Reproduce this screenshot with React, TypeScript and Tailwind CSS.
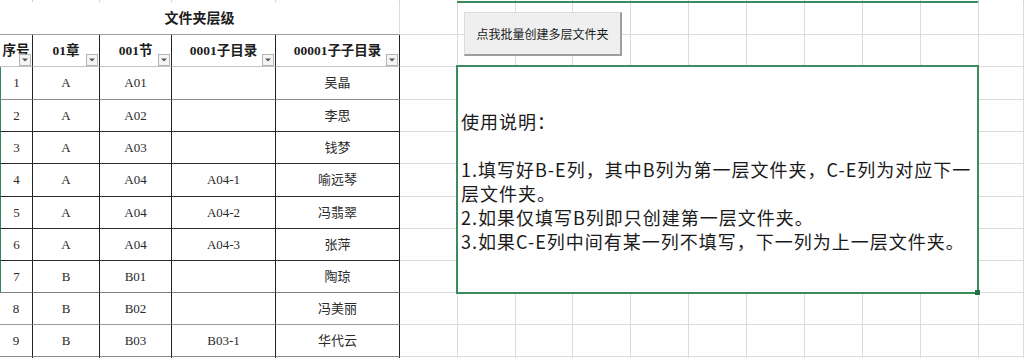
const colW = [
  'w-[33px]', 'w-[67px]', 'w-[72px]', 'w-[104px]', 'w-[124px]',
  'w-[58px]', 'w-[58px]', 'w-[57px]', 'w-[58px]', 'w-[58px]', 'w-[58px]',
  'w-[58px]', 'w-[58px]', 'w-[58px]', 'w-[58px]', 'w-[45px]',
];

const rowH = [
  'h-[33px]', 'h-[32px]', 'h-[32px]', 'h-[33px]', 'h-[32px]',
  'h-[32px]', 'h-[32px]', 'h-[32px]', 'h-[32px]', 'h-[32px]',
];

// bottom line colour of each data row inside the table
const rowLine = [
  'border-b-[#8c8c8c]', 'border-b-[#2a2a2a]', 'border-b-[#2a2a2a]', 'border-b-[#2a2a2a]', 'border-b-[#2a2a2a]',
  'border-b-[#2a2a2a]', 'border-b-[#808080]', 'border-b-[#9a9a9a]', 'border-b-[#8c8c8c]', 'border-b-[#8c8c8c]',
];

const headers = ['序号', '01章', '001节', '0001子目录', '00001子子目录'];

const rows = [
  ['1', 'A', 'A01', '', '吴晶'],
  ['2', 'A', 'A02', '', '李思'],
  ['3', 'A', 'A03', '', '钱梦'],
  ['4', 'A', 'A04', 'A04-1', '喻远琴'],
  ['5', 'A', 'A04', 'A04-2', '冯翡翠'],
  ['6', 'A', 'A04', 'A04-3', '张萍'],
  ['7', 'B', 'B01', '', '陶琼'],
  ['8', 'B', 'B02', '', '冯美丽'],
  ['9', 'B', 'B03', 'B03-1', '华代云'],
  ['', '', '', '', ''],
];

const cellFont = "font-['Liberation_Serif','Noto_Sans_CJK_SC',serif]";

const BlankCells = ({ from = 5 }: { from?: number }) => (
  <>
    {colW.slice(from).map((w, j) => (
      <div key={j} className={`${w} shrink-0 h-full border-r border-b border-[#dcdcdc]`} />
    ))}
  </>
);

const FilterButton = () => (
  <div className="absolute right-[1px] bottom-0 w-[12px] h-[12px] border border-[#b4b4b4] bg-[#f4f4f4] flex items-center justify-center">
    <svg width="6" height="4" viewBox="0 0 6 4">
      <path d="M0 0.5 L6 0.5 L3 3.5 Z" fill="#555" />
    </svg>
  </div>
);

export default function App() {
  return (
    <div className={`relative w-[1024px] h-[358px] overflow-hidden bg-white ${cellFont} text-[#1e1e1e]`}>
      {/* partial row at the top */}
      <div className="flex h-[2px]">
        {colW.map((w, j) => (
          <div key={j} className={`${w} shrink-0 h-full border-r border-[#d0d0d0]`} />
        ))}
      </div>

      {/* title row */}
      <div className="flex h-[33px]">
        <div className="w-[400px] shrink-0 h-full flex items-center justify-center border-b border-r border-b-[#9c9c9c] border-r-[#dcdcdc] text-[14px] font-bold">
          文件夹层级
        </div>
        <BlankCells />
      </div>

      {/* header row */}
      <div className="flex h-[32px]">
        {headers.map((h, j) => (
          <div
            key={j}
            className={`${colW[j]} shrink-0 h-full relative flex items-center justify-center whitespace-nowrap border-r border-b border-r-[#222] border-b-[#c4c4c4] text-[13.5px] font-bold pt-[1px]`}
          >
            <span className="relative">{h}</span>
            <FilterButton />
          </div>
        ))}
        <BlankCells />
      </div>

      {/* data rows */}
      {rows.map((r, i) => (
        <div key={i} className={`flex ${rowH[i]}`}>
          {r.map((v, j) => (
            <div
              key={j}
              className={`${colW[j]} shrink-0 h-full flex items-center justify-center whitespace-nowrap border-r border-b border-r-[#222] ${rowLine[i]} text-[13px] text-[#2a2a2a] ${j === 0 && i < 7 ? 'border-l border-l-[#2e8a57]' : ''}`}
            >
              {v}
            </div>
          ))}
          <BlankCells />
        </div>
      ))}

      {/* green frame line at the very top */}
      <div className="absolute left-[457px] top-[1px] w-[521px] h-[2px] bg-[#3b8a5c]" />

      {/* macro button */}
      <div className="absolute left-[464px] top-[12px] w-[158px] h-[44px] flex items-center justify-center bg-[#efefef] border-t border-l border-r-2 border-b-2 border-t-[#dadada] border-l-[#dadada] border-r-[#9e9e9e] border-b-[#9e9e9e] font-['Noto_Sans_CJK_SC',sans-serif] text-[12px] text-[#1a1a1a]">
        点我批量创建多层文件夹
      </div>

      {/* instructions text box */}
      <div className="absolute left-[456px] top-[65px] w-[523px] h-[229px] border-2 border-[#3d8a5d] bg-white pt-[42px] pl-[3px] font-['Noto_Sans_CJK_SC',sans-serif] text-[18px] tracking-[1px] leading-[24px] text-[#1a1a1a] whitespace-nowrap">
        <div>使用说明：</div>
        <div className="h-[24px]" />
        <div>1.填写好B-E列，其中B列为第一层文件夹，C-E列为对应下一</div>
        <div>层文件夹。</div>
        <div>2.如果仅填写B列即只创建第一层文件夹。</div>
        <div>3.如果C-E列中间有某一列不填写，下一列为上一层文件夹。</div>
        <div className="absolute -right-[3px] -bottom-[3px] w-[5px] h-[5px] bg-[#217346]" />
      </div>
    </div>
  );
}
